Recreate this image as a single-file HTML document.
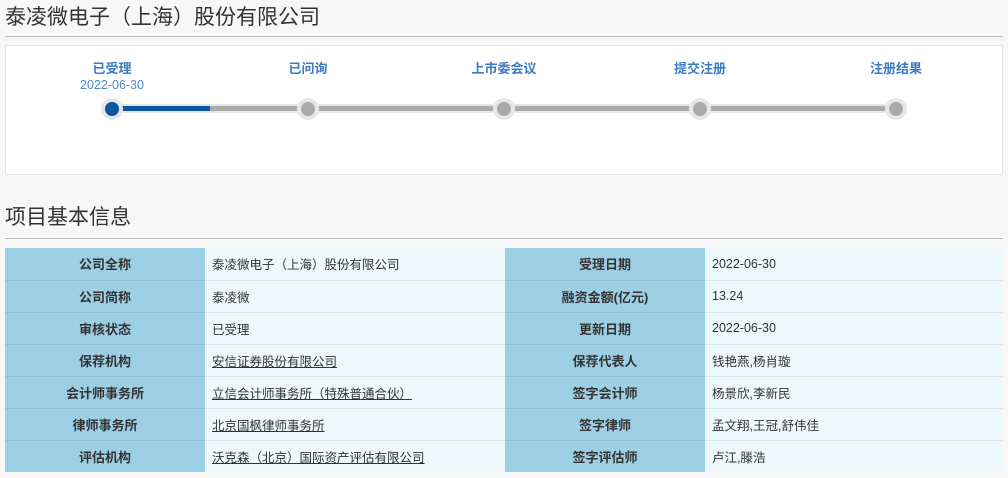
<!DOCTYPE html>
<html><head><meta charset="utf-8"><style>
*{margin:0;padding:0;box-sizing:border-box}
body{width:1008px;height:478px;background:#f7f7f7;font-family:"Liberation Sans","Noto Sans CJK SC",sans-serif;color:#333;position:relative;overflow:hidden}
.h{position:absolute;left:5px;font-size:21px;color:#333;line-height:28px}
.hr{position:absolute;left:5px;width:998px;height:1px;background:#bbb}
.card{position:absolute;left:5px;top:45px;width:998px;height:130px;background:#fff;border:1px solid #e3e3e3}
.st{position:absolute;top:60px;width:120px;margin-left:-60px;text-align:center;color:#3a7bc8;font-size:13px;font-weight:bold;line-height:17px}
.st span{display:block;font-weight:normal;font-size:12.5px;color:#4a8ad0}
.line{position:absolute;top:106px;height:5px;background:#aaa}
.dot{position:absolute;top:98px;width:22px;height:22px;margin-left:-11px;border-radius:50%;background:#e6e6e6}
.dot i{position:absolute;left:4px;top:4px;width:14px;height:14px;border-radius:50%;background:#aaa}
table{position:absolute;left:5px;top:248px;width:998px;border-collapse:collapse;font-size:13px}
td{height:32px;border-top:1px solid #dde6ea;padding:0}
td.l{background:#9dcfe4;text-align:center;font-weight:bold;color:#333;width:200px;border-top-color:#8fc0d6}
td.v{background:#edf8fd;padding-left:7px;color:#333;font-size:12.5px}
td.v a{color:#333;text-decoration:underline}
tr:first-child td{border-top:none}
</style></head><body>
<div class="h" style="top:4px">泰凌微电子（上海）股份有限公司</div>
<div class="hr" style="top:36px"></div>
<div class="card"></div>
<div class="st" style="left:112px">已受理<span>2022-06-30</span></div>
<div class="st" style="left:308px">已问询</div>
<div class="st" style="left:504px">上市委会议</div>
<div class="st" style="left:700px">提交注册</div>
<div class="st" style="left:896px">注册结果</div>
<div class="line" style="left:112px;width:784px;background:#e6e6e6;top:104px;height:9px"></div>
<div class="line" style="left:112px;width:784px"></div>
<div class="line" style="left:112px;width:98px;background:#0d56a0"></div>
<div class="dot" style="left:112px"><i style="background:#0d56a0"></i></div>
<div class="dot" style="left:308px"><i></i></div>
<div class="dot" style="left:504px"><i></i></div>
<div class="dot" style="left:700px"><i></i></div>
<div class="dot" style="left:896px"><i></i></div>
<div class="h" style="top:204px">项目基本信息</div>
<div class="hr" style="top:238px"></div>
<table>
<tr><td class="l">公司全称</td><td class="v" style="width:300px">泰凌微电子（上海）股份有限公司</td><td class="l">受理日期</td><td class="v">2022-06-30</td></tr>
<tr><td class="l">公司简称</td><td class="v">泰凌微</td><td class="l">融资金额(亿元)</td><td class="v">13.24</td></tr>
<tr><td class="l">审核状态</td><td class="v">已受理</td><td class="l">更新日期</td><td class="v">2022-06-30</td></tr>
<tr><td class="l">保荐机构</td><td class="v"><a>安信证券股份有限公司</a></td><td class="l">保荐代表人</td><td class="v">钱艳燕,杨肖璇</td></tr>
<tr><td class="l">会计师事务所</td><td class="v"><a>立信会计师事务所（特殊普通合伙）</a></td><td class="l">签字会计师</td><td class="v">杨景欣,李新民</td></tr>
<tr><td class="l">律师事务所</td><td class="v"><a>北京国枫律师事务所</a></td><td class="l">签字律师</td><td class="v">孟文翔,王冠,舒伟佳</td></tr>
<tr><td class="l">评估机构</td><td class="v"><a>沃克森（北京）国际资产评估有限公司</a></td><td class="l">签字评估师</td><td class="v">卢江,滕浩</td></tr>
</table>
</body></html>
